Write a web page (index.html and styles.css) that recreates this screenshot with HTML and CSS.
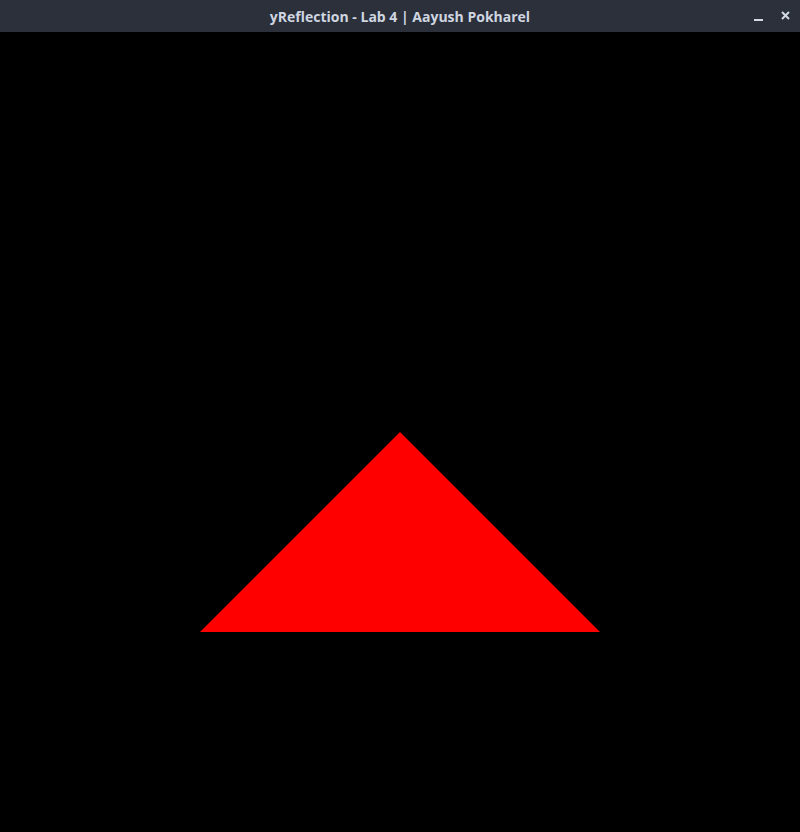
FILE: index.html
```html
<!DOCTYPE html>
<html>
<head>
<meta charset="utf-8">
<link rel="stylesheet" href="styles.css">
</head>
<body>
<div class="window">
  <header class="titlebar">
    <span class="spacer"></span>
    <span class="title">yReflection - Lab 4 | Aayush Pokharel</span>
    <span class="controls">
      <svg class="btn" width="16" height="16" viewBox="0 0 16 16"><rect x="3" y="11" width="9" height="2" fill="#d3dae3"/></svg>
      <svg class="btn" width="16" height="16" viewBox="0 0 16 16"><path d="M4 4 L11 11 M11 4 L4 11" stroke="#d3dae3" stroke-width="2"/></svg>
    </span>
  </header>
  <main class="canvas">
    <svg width="800" height="800" viewBox="0 0 800 800"><polygon points="200,600 400,400 600,600" fill="#ff0000"/></svg>
  </main>
</div>
</body>
</html>
```
FILE: styles.css
```css
html, body { margin: 0; padding: 0; background: #000; }
.window { display: flex; flex-direction: column; width: 800px; height: 832px; }
.titlebar {
  height: 32px; flex: none;
  background: #2b303b;
  display: flex; align-items: center;
  font-family: "Open Sans", sans-serif; font-weight: 700; font-size: 14px;
  color: #cfd6e0;
}
.spacer { width: 64px; }
.title { flex: 1; text-align: center; letter-spacing: 0; }
.controls { width: 64px; display: flex; justify-content: flex-end; gap: 11px; padding-right: 6px; box-sizing: border-box; }
.btn { display: block; }
.canvas { flex: none; height: 800px; background: #000; }
.canvas svg { display: block; }
```
